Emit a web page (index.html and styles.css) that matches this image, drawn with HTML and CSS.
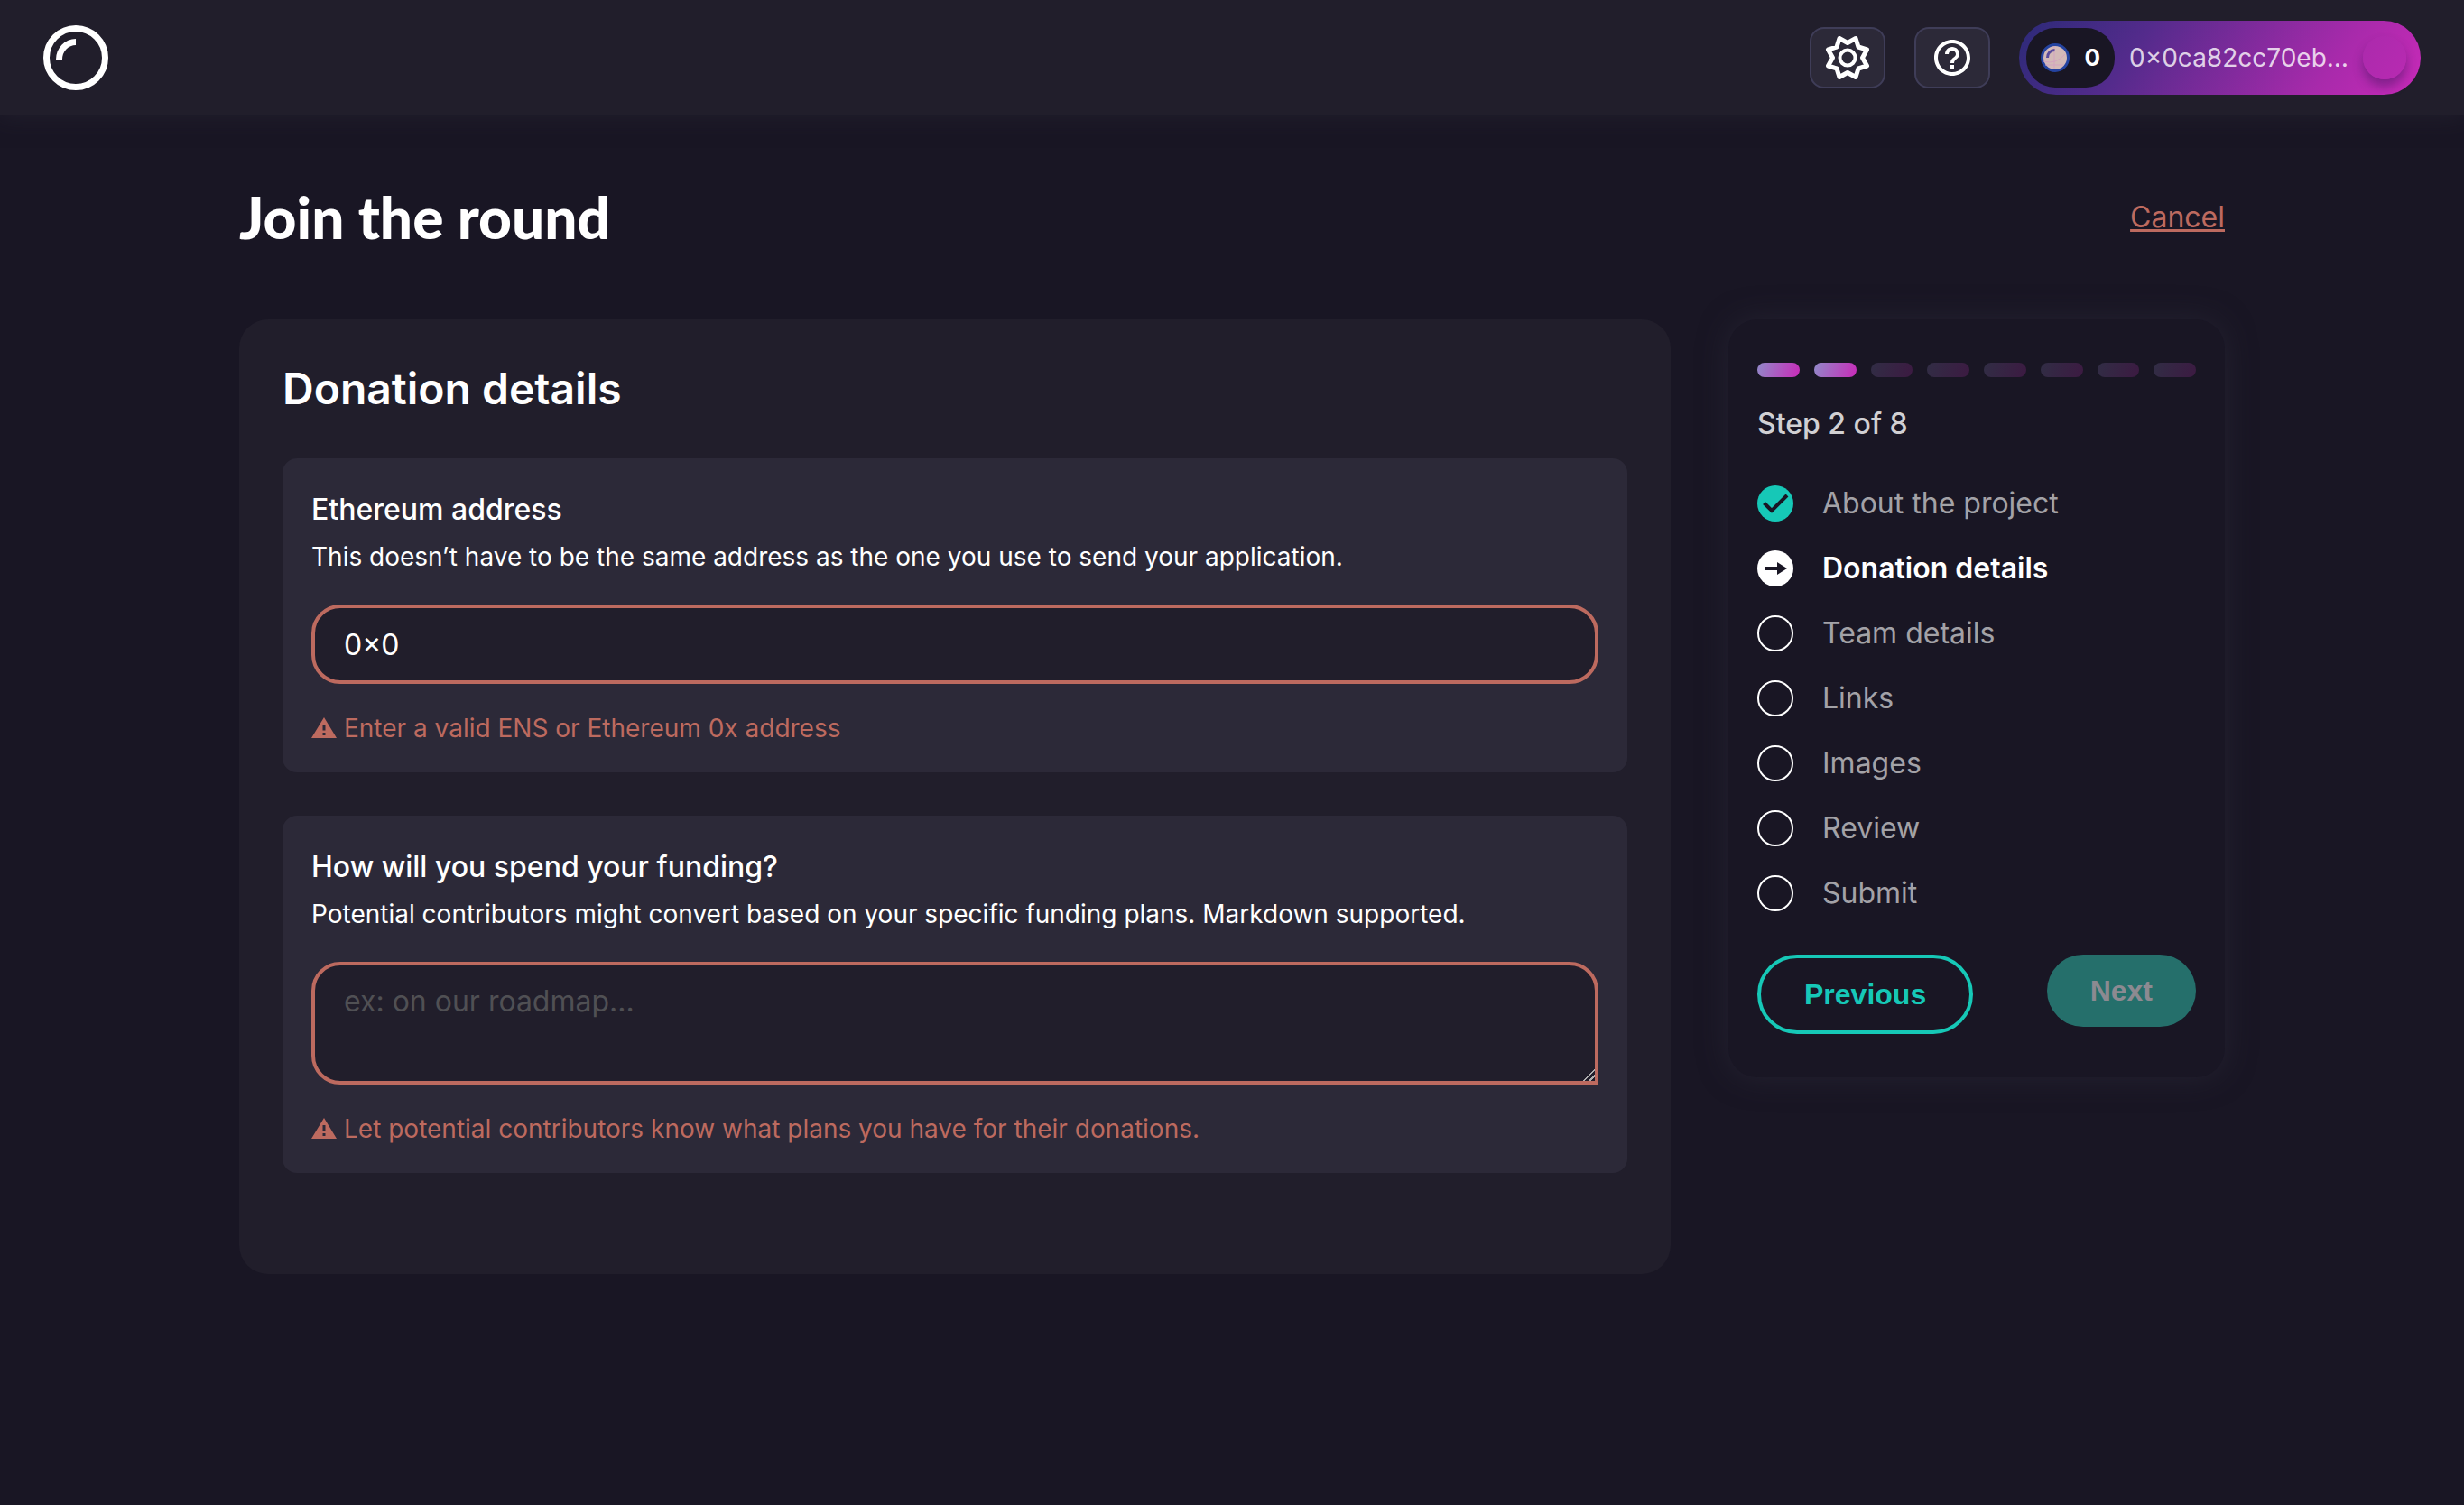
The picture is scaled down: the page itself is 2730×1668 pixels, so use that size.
FILE: index.html
```html
<!DOCTYPE html>
<html lang="en">
<head>
<meta charset="utf-8">
<meta name="viewport" content="width=device-width, initial-scale=1">
<title>Join the round</title>
<link rel="stylesheet" href="styles.css">
</head>
<body>
<header class="navbar">
  <a class="logo" href="#" aria-label="Home">
    <svg width="72" height="72" viewBox="0 0 72 72" fill="none" stroke="#fff" stroke-width="7">
      <circle cx="36" cy="36" r="32.5"/>
      <path d="M17.500 38A18.500 19.500 0 0 1 36 18.500"/>
    </svg>
  </a>
  <div class="nav-actions">
    <button class="icon-button" type="button" aria-label="Settings">
      <svg width="56" height="56" viewBox="-28 -28 56 56" fill="none" stroke="#fff" stroke-width="5" stroke-linejoin="round">
        <path d="M0-16.500 9-21.500 12-12 21.500-9 16.500 0 21.500 9 12 12 9 21.500 0 16.500-9 21.500-12 12-21.500 9-16.500 0-21.500-9-12-12-9-21.500Z"/>
        <circle r="8.500" stroke-width="4"/>
      </svg>
    </button>
    <button class="icon-button" type="button" aria-label="Help">
      <svg width="48" height="48" viewBox="0 0 24 24" fill="#fff">
        <path d="M11 18h2v-2h-2v2zm1-16C6.480 2 2 6.480 2 12s4.480 10 10 10 10-4.480 10-10S17.520 2 12 2zm0 18c-4.410 0-8-3.590-8-8s3.590-8 8-8 8 3.590 8 8-3.590 8-8 8zm0-14c-2.210 0-4 1.790-4 4h2c0-1.100.900-2 2-2s2 .900 2 2c0 2-3 1.750-3 5h2c0-2.250 3-2.500 3-5 0-2.210-1.790-4-4-4z"/>
      </svg>
    </button>
    <button class="wallet" type="button">
      <span class="balance">
        <svg width="32" height="32" viewBox="0 0 32 32" fill="none">
          <circle cx="16" cy="16" r="14.500" fill="#d3b9b8" stroke="#2443a0" stroke-width="3"/>
          <path d="M15 3v26M3 20q14 4 24-8M5 24h20" stroke="#d3a3c0" stroke-width="1"/>
          <path d="M7.500 16A8 8 0 0 1 15.500 7.500" stroke="#5a4b9c" stroke-width="3"/>
        </svg>
        <span>0</span>
      </span>
      <span class="address">0×0ca82cc70eb…</span>
      <span class="avatar"></span>
    </button>
  </div>
</header>

<main class="page">
  <div class="page-head">
    <h1>Join the round</h1>
    <a class="cancel" href="#">Cancel</a>
  </div>
  <div class="columns">
    <form class="form-card" id="donation">
      <h2>Donation details</h2>
      <div class="field">
        <label for="address">Ethereum address</label>
        <p class="hint">This doesn’t have to be the same address as the one you use to send your application.</p>
        <input class="control" id="address" type="text" value="0×0">
        <p class="error">
          <svg width="28" height="28" viewBox="0 0 28 28"><path fill="currentColor" fill-rule="evenodd" d="M14 2 28 25H0ZM12.500 10v6.500h3V10ZM12.500 19v3h3v-3Z"/></svg>
          Enter a valid ENS or Ethereum 0x address
        </p>
      </div>
      <div class="field">
        <label for="plans">How will you spend your funding?</label>
        <p class="hint">Potential contributors might convert based on your specific funding plans. Markdown supported.</p>
        <textarea class="control control-area" id="plans" placeholder="ex: on our roadmap..."></textarea>
        <p class="error">
          <svg width="28" height="28" viewBox="0 0 28 28"><path fill="currentColor" fill-rule="evenodd" d="M14 2 28 25H0ZM12.500 10v6.500h3V10ZM12.500 19v3h3v-3Z"/></svg>
          Let potential contributors know what plans you have for their donations.
        </p>
      </div>
    </form>

    <aside class="progress-card">
      <div class="progress">
        <span class="bar bar-done"></span><span class="bar bar-done"></span><span class="bar"></span><span class="bar"></span><span class="bar"></span><span class="bar"></span><span class="bar"></span><span class="bar"></span>
      </div>
      <p class="step-count">Step 2 of 8</p>
      <ol class="steps">
        <li>
          <svg width="40" height="40" viewBox="0 0 40 40" fill="none"><circle cx="20" cy="20" r="20" fill="#16c8b7"/><path d="M7.500 19.500 16 28 33 11" stroke="#191624" stroke-width="4"/></svg>
          About the project
        </li>
        <li class="current">
          <svg width="40" height="40" viewBox="0 0 40 40"><circle cx="20" cy="20" r="20" fill="#fff"/><path fill="#191624" d="M9 18h13v-5l11 7-11 7v-5H9Z"/></svg>
          Donation details
        </li>
        <li><span class="dot"></span>Team details</li>
        <li><span class="dot"></span>Links</li>
        <li><span class="dot"></span>Images</li>
        <li><span class="dot"></span>Review</li>
        <li><span class="dot"></span>Submit</li>
      </ol>
      <div class="step-nav">
        <button class="button button-outline" type="button">Previous</button>
        <button class="button button-primary" type="submit" form="donation" disabled>Next</button>
      </div>
    </aside>
  </div>
</main>
</body>
</html>
```

FILE: styles.css
```css
:root {
  --bg: #191624;
  --surface: #211e2b;
  --field: #2c2938;
  --error: #bd6a5f;
  --accent: #16c8b7;
}

* {
  box-sizing: border-box;
}

body {
  margin: 0;
  min-height: 100vh;
  background: var(--bg);
  color: #fff;
  font-family: Inter, "Liberation Sans", sans-serif;
  font-size: 32px;
  line-height: 40px;
}

h1, h2, p, ol {
  margin: 0;
}

button, input, textarea {
  font: inherit;
  color: inherit;
}

svg {
  display: block;
  flex: none;
}

/* Top bar */
.navbar {
  display: flex;
  align-items: center;
  justify-content: space-between;
  height: 128px;
  padding: 0 48px;
  background: var(--surface);
  box-shadow: 0 0 24px rgba(44, 41, 56, 0.5);
}

.nav-actions {
  display: flex;
  align-items: center;
  gap: 32px;
}

.icon-button {
  display: flex;
  align-items: center;
  justify-content: center;
  width: 84px;
  height: 68px;
  padding: 0;
  border: 2px solid #3f3d58;
  border-radius: 16px;
  background: var(--field);
}

.wallet {
  display: flex;
  align-items: center;
  gap: 16px;
  height: 82px;
  padding: 8px 16px 8px 8px;
  border: 0;
  border-radius: 41px;
  background: linear-gradient(125deg, #2c2a78 0%, #542b8c 30%, #a82aab 76%, #c82ab8 100%);
  font-size: 28px;
}

.balance {
  display: flex;
  align-items: center;
  gap: 16px;
  height: 66px;
  padding: 0 16px;
  border-radius: 32px;
  background: var(--bg);
  font-size: 26px;
  font-weight: 700;
}

.address {
  color: rgba(255, 255, 255, 0.8);
}

.avatar {
  width: 48px;
  height: 48px;
  border-radius: 50%;
  background: linear-gradient(125deg, #ab2aac, #b82ab2);
  box-shadow: 0 8px 12px rgba(60, 20, 90, 0.45);
}

/* Page */
.page {
  max-width: 2200px;
  margin: 0 auto;
  padding: 64px 0;
}

.page-head {
  display: flex;
  align-items: center;
  justify-content: space-between;
  margin-bottom: 64px;
}

h1 {
  font-family: Lato, Inter, sans-serif;
  font-size: 64px;
  font-weight: 900;
  line-height: 98px;
}

.cancel {
  color: var(--error);
}

.columns {
  display: grid;
  grid-template-columns: minmax(0, 1fr) 550px;
  align-items: start;
  gap: 64px;
}

/* Form */
.form-card {
  padding: 48px 48px 112px;
  border-radius: 32px;
  background: var(--surface);
}

h2 {
  margin-bottom: 48px;
  font-size: 48px;
  font-weight: 600;
  line-height: 58px;
}

.field {
  padding: 32px;
  border-radius: 16px;
  background: var(--field);
}

.field + .field {
  margin-top: 48px;
}

.field label {
  display: block;
  font-weight: 500;
  line-height: 50px;
}

.hint {
  margin: 6px 0 32px;
  font-size: 28px;
  line-height: 42px;
}

.control {
  display: block;
  width: 100%;
  height: 88px;
  padding: 20px 32px;
  border: 4px solid var(--error);
  border-radius: 32px;
  background: var(--surface);
}

.control-area {
  height: 136px;
  border-bottom-right-radius: 0;
  resize: vertical;
}

.control-area::-webkit-resizer {
  background: linear-gradient(135deg, transparent 54%, #b0b0b0 54%, #b0b0b0 62%, transparent 62%, transparent 76%, #b0b0b0 76%, #b0b0b0 84%, transparent 84%);
}

.control::placeholder {
  color: #505054;
}

.error {
  display: flex;
  align-items: center;
  gap: 8px;
  margin-top: 32px;
  color: var(--error);
  font-size: 28px;
  line-height: 34px;
}

/* Progress */
.progress-card {
  padding: 48px 32px;
  border-radius: 32px;
  background: var(--bg);
  box-shadow: 0 0 32px rgba(44, 41, 56, 0.6);
}

.progress {
  display: flex;
  gap: 16px;
  margin-bottom: 32px;
}

.bar {
  flex: 1;
  height: 16px;
  border-radius: 8px;
  background: linear-gradient(109deg, #9189c9, #c82ab8);
  opacity: 0.2;
}

.bar-done {
  opacity: 1;
}

.step-count {
  margin-bottom: 48px;
  color: #d1d0d3;
  font-weight: 500;
}

.steps {
  display: flex;
  flex-direction: column;
  gap: 32px;
  padding: 0;
  list-style: none;
  color: #a3a2a7;
}

.steps li {
  display: flex;
  align-items: center;
  gap: 32px;
}

.steps .current {
  color: #fff;
  font-weight: 600;
}

.dot {
  width: 40px;
  height: 40px;
  border: 2px solid #fff;
  border-radius: 50%;
}

.step-nav {
  display: flex;
  align-items: flex-start;
  justify-content: space-between;
  margin-top: 48px;
}

.button {
  padding: 20px 48px;
  border: 0;
  border-radius: 44px;
  font-family: "Liberation Sans", Arial, sans-serif;
  font-weight: 700;
}

.button-outline {
  border: 4px solid var(--accent);
  background: transparent;
  color: var(--accent);
}

.button-primary {
  background: #256f6b;
  color: #8c8a91;
}
```
